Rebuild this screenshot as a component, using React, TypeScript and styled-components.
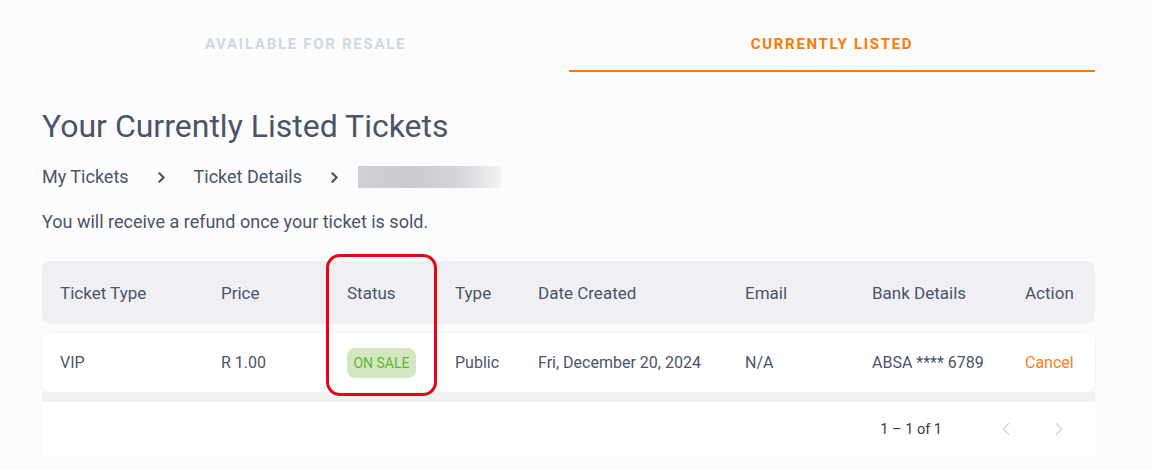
import React from 'react';
import styled, { createGlobalStyle } from 'styled-components';
import { ChevronRight, ChevronLeft } from 'lucide-react';

const GlobalStyle = createGlobalStyle`
  html, body {
    margin: 0;
    padding: 0;
    background: #fcfcfc;
    font-family: Roboto, 'Liberation Sans', Arial, sans-serif;
    color: #4a5568;
  }
`;

const Page = styled.div`
  width: 1053px;
  padding: 0 0 0 42px;
`;

const Tabs = styled.div`
  display: grid;
  grid-template-columns: 527px 526px;
`;

const Tab = styled.button<{ $active?: boolean }>`
  border: none;
  background: transparent;
  padding: 34px 0 16px;
  border-bottom: 2px solid ${(p) => (p.$active ? '#ff7a00' : 'transparent')};
  font-family: Roboto, 'Liberation Sans', sans-serif;
  font-size: 15px;
  font-weight: 700;
  line-height: 20px;
  letter-spacing: 1.7px;
  text-transform: uppercase;
  color: ${(p) => (p.$active ? '#ff7a00' : '#cfd8e3')};
  cursor: pointer;
`;

const Title = styled.h1`
  margin: 35px 0 0;
  font-size: 32px;
  font-weight: 400;
  line-height: 38px;
  color: #4a5568;
`;

const Crumbs = styled.nav`
  display: flex;
  align-items: center;
  gap: 24px;
  margin-top: 20px;
  font-size: 18px;
  line-height: 24px;
  color: #4a5568;
`;

const Crumb = styled.span``;

const Blurred = styled.div`
  width: 143px;
  height: 22px;
  margin-left: -9px;
  background: linear-gradient(90deg, #cfd1d4 0%, #c9cbce 35%, #d3d5d8 70%, #f3f3f4 100%);
  filter: blur(0.6px);
`;

const Note = styled.p`
  margin: 21px 0 0;
  font-size: 18px;
  line-height: 24px;
  color: #4a5568;
`;

const TableWrap = styled.div`
  position: relative;
  margin-top: 27px;
`;

const cols = '161px 126px 108px 83px 207px 127px 153px 88px';

const HeaderRow = styled.div`
  display: grid;
  grid-template-columns: ${cols};
  align-items: center;
  height: 63px;
  background: #f0f0f4;
  border-radius: 8px;
`;

const HeadCell = styled.div`
  padding-left: 18px;
  font-size: 17px;
  color: #4a5568;
  white-space: nowrap;
`;

const BodyRow = styled.div`
  display: grid;
  grid-template-columns: ${cols};
  align-items: center;
  height: 59px;
  margin-top: 9px;
  background: #ffffff;
  border-radius: 8px;
  box-shadow: 0 1px 3px rgba(0, 0, 0, 0.06), 0 0 0 1px rgba(0, 0, 0, 0.02);
`;

const Cell = styled.div<{ $accent?: boolean }>`
  padding-left: 18px;
  font-size: 16px;
  color: ${(p) => (p.$accent ? '#ff7a1a' : '#4a5568')};
  white-space: nowrap;
  cursor: ${(p) => (p.$accent ? 'pointer' : 'default')};
`;

const Badge = styled.span`
  display: inline-flex;
  align-items: center;
  justify-content: center;
  width: 69px;
  height: 30px;
  border-radius: 8px;
  background: #d3e7c0;
  color: #5fb52c;
  font-size: 14px;
  font-weight: 400;
  text-transform: uppercase;
`;

const Track = styled.div`
  height: 10px;
  background: #f1f1f3;
`;

const Pager = styled.div`
  display: flex;
  align-items: center;
  justify-content: flex-end;
  height: 54px;
  background: #ffffff;
  padding-right: 16px;
  font-size: 14.5px;
  color: #333a44;
`;

const Range = styled.span`
  margin-right: 31px;
`;

const PageButton = styled.button`
  display: flex;
  align-items: center;
  justify-content: center;
  width: 40px;
  height: 40px;
  margin-left: 13px;
  border: none;
  background: transparent;
  color: #d6d6d6;
  padding: 0;
`;

const Highlight = styled.div`
  position: absolute;
  left: 284px;
  top: -7px;
  width: 105px;
  height: 136px;
  border: 3px solid #e30613;
  border-radius: 14px;
  pointer-events: none;
`;

const headers = ['Ticket Type', 'Price', 'Status', 'Type', 'Date Created', 'Email', 'Bank Details', 'Action'];

export default function App() {
  return (
    <>
      <GlobalStyle />
      <Page>
        <Tabs>
          <Tab>Available for resale</Tab>
          <Tab $active>Currently listed</Tab>
        </Tabs>

        <Title>Your Currently Listed Tickets</Title>

        <Crumbs>
          <Crumb>My Tickets</Crumb>
          <ChevronRight size={17} strokeWidth={3.2} color="#4a5568" />
          <Crumb>Ticket Details</Crumb>
          <ChevronRight size={17} strokeWidth={3.2} color="#4a5568" />
          <Blurred />
        </Crumbs>

        <Note>You will receive a refund once your ticket is sold.</Note>

        <TableWrap>
          <HeaderRow>
            {headers.map((h) => (
              <HeadCell key={h}>{h}</HeadCell>
            ))}
          </HeaderRow>
          <BodyRow>
            <Cell>VIP</Cell>
            <Cell>R 1.00</Cell>
            <Cell>
              <Badge>On sale</Badge>
            </Cell>
            <Cell>Public</Cell>
            <Cell>Fri, December 20, 2024</Cell>
            <Cell>N/A</Cell>
            <Cell>ABSA **** 6789</Cell>
            <Cell $accent>Cancel</Cell>
          </BodyRow>
          <Track />
          <Pager>
            <Range>1 – 1 of 1</Range>
            <PageButton>
              <ChevronLeft size={22} strokeWidth={1.5} />
            </PageButton>
            <PageButton>
              <ChevronRight size={22} strokeWidth={1.5} />
            </PageButton>
          </Pager>
          <Highlight />
        </TableWrap>
      </Page>
    </>
  );
}
